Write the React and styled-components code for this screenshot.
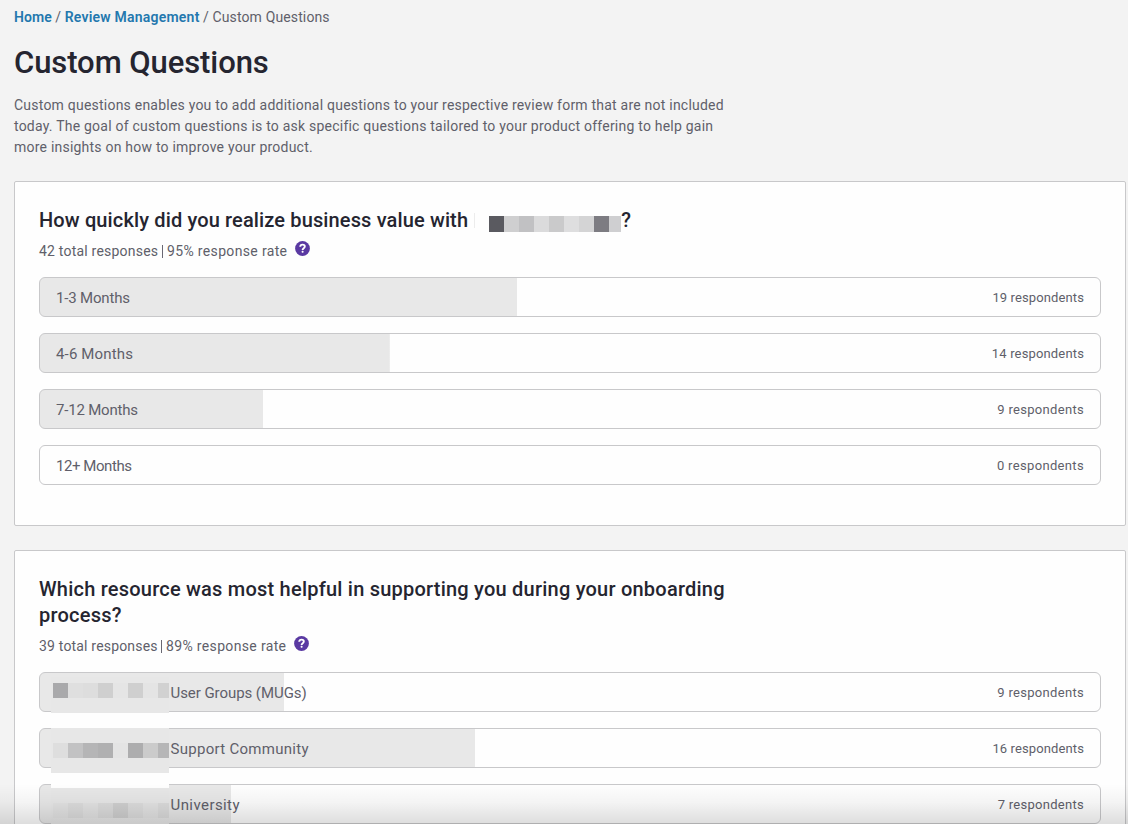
import React from 'react';
import styled, { createGlobalStyle } from 'styled-components';

const GlobalStyle = createGlobalStyle`
  * { box-sizing: border-box; }
  html, body { margin: 0; height: 100%; }
  body {
    background: #f3f3f3;
    color: #605f6a;
    font-family: Roboto, "Liberation Sans", sans-serif;
    overflow: hidden;
  }
`;

const Page = styled.main`
  position: relative;
  width: 1128px;
  height: 824px;
  padding: 7px 2px 0 14px;
  overflow: hidden;
`;

const Breadcrumb = styled.nav`
  display: flex;
  gap: 3.5px;
  height: 20px;
  font-size: 14px;
  line-height: 20px;
  letter-spacing: 0.13px;
`;

const Crumb = styled.a`
  color: #2378ae;
  font-weight: 600;
  letter-spacing: ${(p) => p.$tracking || 0}px;
  text-decoration: none;
`;

const PageTitle = styled.h1`
  margin: 16px 0 0;
  color: #252530;
  font-size: 31px;
  font-weight: 500;
  line-height: 40px;
  letter-spacing: -0.07px;
`;

const Intro = styled.p`
  margin: 12px 0 23px;
  font-size: 14px;
  line-height: 21px;
  letter-spacing: 0.222px;
  white-space: nowrap;
`;

const Card = styled.section`
  margin-bottom: 24px;
  padding: 25px 24px 40px;
  background: #fefefe;
  border: 1px solid #c8c8ca;
  border-radius: 2px;
`;

const Question = styled.h2`
  display: flex;
  align-items: center;
  margin: 0;
  color: #252530;
  font-size: 20px;
  font-weight: 500;
  line-height: 26px;
  letter-spacing: ${(p) => p.$tracking}px;
  white-space: nowrap;
`;

const Meta = styled.div`
  display: flex;
  align-items: center;
  height: 44px;
  padding-bottom: 8px;
  font-size: 14px;
  line-height: 20px;
  white-space: nowrap;
`;

const MetaPart = styled.span`
  width: ${(p) => p.$width}px;
  letter-spacing: ${(p) => p.$tracking}px;
`;

const Divider = styled.span`
  width: 1px;
  height: 13px;
  margin: 1px 4px 0 3px;
  background: #696873;
`;

const HelpIcon = styled.svg`
  width: 15px;
  height: 15px;
  margin: -5px 0 0 6.5px;
`;

const Answers = styled.div`
  display: flex;
  flex-direction: column;
  gap: 16px;
`;

const Answer = styled.div`
  position: relative;
  display: flex;
  align-items: center;
  justify-content: space-between;
  height: 40px;
  padding: 2px 16px 0;
  border: 1px solid #c8c8ca;
  border-radius: 6px;
  background: linear-gradient(#e8e8e8, #e8e8e8) 0 0 / ${(p) => p.$share}% 100% no-repeat #fefefe;
`;

const Label = styled.span`
  padding-left: ${(p) => (p.$masked ? 114.5 : 0)}px;
  font-size: 15px;
  line-height: 20px;
  letter-spacing: ${(p) => p.$tracking}px;
`;

const Count = styled.span`
  font-size: 13px;
  line-height: 20px;
  letter-spacing: ${(p) => p.$tracking}px;
`;

const TitleMask = styled.span`
  display: flex;
  width: 132px;
  height: 16px;
  margin: 8px 0 0 14px;
`;

const Seam = styled.span`
  width: 1px;
  height: 15px;
  margin-left: 6px;
  background: #ececec;
`;

const LabelMask = styled.span`
  position: absolute;
  top: ${(p) => p.$top}px;
  left: 11px;
  display: flex;
  width: 118px;
  height: ${(p) => p.$height}px;
  padding-top: ${(p) => p.$inset}px;
  padding-left: 2px;
  background: #e7e7e7;
  border-top: ${(p) => p.$gap || 0}px solid #fefefe;
`;

const Pixel = styled.span`
  flex: 0 1 15px;
  height: ${(p) => p.$size || 15}px;
  background: ${(p) => p.$tone};

  &:last-child { flex: 1 1 0; }
`;

const BottomShade = styled.div`
  position: absolute;
  right: 0;
  bottom: 0;
  left: 0;
  height: 40px;
  background: linear-gradient(to bottom, rgba(0, 0, 0, 0), rgba(0, 0, 0, 0.04) 45%, rgba(0, 0, 0, 0.13));
`;

const titleTones = ['#5a5a60', '#cfcfd0', '#c1c1c3', '#dbdbdc', '#cacacb', '#dededf', '#d4d4d5', '#7d7c82', '#cfcfd1'];

const speed = [
  { label: '1-3 Months', tracking: -0.175, share: 45, count: '19 respondents', countTracking: 0.117 },
  { label: '4-6 Months', tracking: 0.159, share: 33, count: '14 respondents', countTracking: 0.155 },
  { label: '7-12 Months', tracking: -0.2, share: 21.05, count: '9 respondents', countTracking: 0.31 },
  { label: '12+ Months', tracking: -0.437, share: 0, count: '0 respondents', countTracking: 0.34 },
];

const resources = [
  {
    label: 'User Groups (MUGs)', tracking: -0.06, share: 23.03, count: '9 respondents', countTracking: 0.31,
    mask: { top: 4, height: 36, inset: 6, tones: ['#a9a9ab', '#dfdfdf', '#dddddd', '#cfcfcf', '#e5e5e5', '#cfcfcf', '#e4e4e4', '#d1d1d1'] },
  },
  {
    label: 'Support Community', tracking: 0.282, share: 41.04, count: '16 respondents', countTracking: 0.117,
    mask: { top: -1, height: 45, inset: 15, tones: ['#dedede', '#c2c2c3', '#b5b5b6', '#b0b0b1', '#e4e4e4', '#adadae', '#cbcbcb', '#b6b6b7'] },
  },
  {
    label: 'University', tracking: 0.42, share: 18.02, count: '7 respondents', countTracking: 0.277,
    mask: { top: -1, height: 40, inset: 15, gap: 4, tones: ['#e3e3e3', '#dddddd', '#e3e3e3', '#dcdcdc', '#d0d0d0', '#dddddd', '#e3e3e3', '#dcdcdc'] },
  },
];

function Help() {
  return (
    <HelpIcon viewBox="0 0 15 15" aria-label="Help">
      <circle cx="7.5" cy="7.5" r="7.4" fill="#5a39a2" />
      <path d="M5.2 5.8C5.3 4.3 6.2 3.6 7.6 3.6c1.3 0 2.2.7 2.2 1.9 0 1.7-2.2 1.6-2.2 3.4" fill="none" stroke="#fff" strokeWidth="1.9" />
      <rect x="6.6" y="9.8" width="2" height="2" rx=".8" fill="#fff" />
    </HelpIcon>
  );
}

function Responses({ total, totalTracking, rate, width }) {
  return (
    <Meta>
      <MetaPart $width={width} $tracking={totalTracking}>{total}</MetaPart>
      <Divider />
      <MetaPart $width={121} $tracking={0.343}>{rate}</MetaPart>
      <Help />
    </Meta>
  );
}

function AnswerList({ items }) {
  return (
    <Answers>
      {items.map(({ label, tracking, share, count, countTracking, mask }) => (
        <Answer key={label} $share={share}>
          {mask && (
            <LabelMask $top={mask.top} $height={mask.height} $inset={mask.inset} $gap={mask.gap}>
              {mask.tones.map((tone, i) => <Pixel key={i} $tone={tone} />)}
            </LabelMask>
          )}
          <Label $masked={Boolean(mask)} $tracking={tracking}>{label}</Label>
          <Count $tracking={countTracking}>{count}</Count>
        </Answer>
      ))}
    </Answers>
  );
}

export default function App() {
  return (
    <>
      <GlobalStyle />
      <Page>
        <Breadcrumb>
          <Crumb $tracking={0.05}>Home</Crumb>
          <span>/</span>
          <Crumb $tracking={0.22}>Review Management</Crumb>
          <span>/</span>
          <span>Custom Questions</span>
        </Breadcrumb>
        <PageTitle>Custom Questions</PageTitle>
        <Intro>
          Custom questions enables you to add additional questions to your respective review form that are not included
          <br />
          today. The goal of custom questions is to ask specific questions tailored to your product offering to help gain
          <br />
          more insights on how to improve your product.
        </Intro>
        <Card>
          <Question $tracking={0.135}>
            How quickly did you realize business value with
            <Seam />
            <TitleMask>
              {titleTones.map((tone, i) => <Pixel key={i} $tone={tone} $size={16} />)}
            </TitleMask>
            ?
          </Question>
          <Responses total="42 total responses" totalTracking={0.21} rate="95% response rate" width={120} />
          <AnswerList items={speed} />
        </Card>
        <Card>
          <Question $tracking={0.222}>
            <span>
              Which resource was most helpful in supporting you during your onboarding
              <br />
              process?
            </span>
          </Question>
          <Responses total="39 total responses" totalTracking={0.181} rate="89% response rate" width={119} />
          <AnswerList items={resources} />
        </Card>
        <BottomShade />
      </Page>
    </>
  );
}
